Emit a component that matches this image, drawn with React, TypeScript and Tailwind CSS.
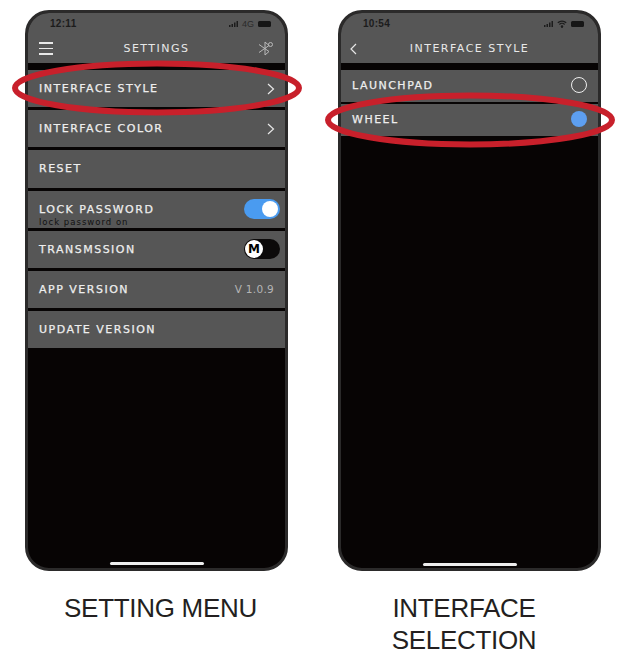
const wide = "font-['DejaVu_Sans',sans-serif]";

function Row({ label, sub, h = "h-[37.2px]", right }: { label: string; sub?: string; h?: string; right?: React.ReactNode }) {
  return (
    <div className={`${h} bg-[#565656] flex items-center justify-between pl-[11px] pr-[5px] shrink-0`}>
      <div className="relative">
        <div className={`${wide} text-[11px] tracking-[1.5px] text-[#eeeeee] leading-none [-webkit-text-stroke:0.25px_#eeeeee]`}>{label}</div>
        {sub && <div className={`${wide} absolute left-0 top-[14px] whitespace-nowrap text-[8.5px] tracking-[1px] text-[#111111] leading-none`}>{sub}</div>}
      </div>
      {right}
    </div>
  );
}

function Chevron() {
  return (
    <svg width="10" height="14" viewBox="0 0 10 14" fill="none" stroke="#e6e6e6" strokeWidth="1.2" className="mr-[4px]">
      <path d="M2 2l5.5 5L2 12" />
    </svg>
  );
}

function Toggle() {
  return (
    <div className="w-[36px] h-[20px] rounded-full bg-[#4a9bf0] flex items-center justify-end pr-[2px]">
      <div className="w-[16px] h-[16px] rounded-full bg-white" />
    </div>
  );
}

function TransToggle() {
  return (
    <div className="w-[36px] h-[20px] rounded-full bg-[#0c0a0a] flex items-center pl-[1px]">
      <div className={`${wide} w-[18px] h-[18px] rounded-full bg-white flex items-center justify-center text-[12px] font-bold leading-none text-black`}>M</div>
    </div>
  );
}

function Bluetooth() {
  return (
    <svg width="16" height="15" viewBox="0 0 16 15" fill="none" stroke="#b9b9b9" strokeWidth="1">
      <path d="M1 3.5l10 7-4 3.5V1l4 3.5-10 7" />
      <circle cx="12.5" cy="3.5" r="2" />
    </svg>
  );
}

function Status({ time, wifi, label }: { time: string; wifi?: boolean; label?: string }) {
  return (
    <div className="h-[17px] flex items-center justify-between pl-[22px] pr-[14px] pt-[5px]">
      <span className="font-['Liberation_Sans',sans-serif] text-[10px] font-semibold tracking-[0.3px] text-[#1c1c1c] leading-none">{time}</span>
      <div className="flex items-center gap-[4px]">
        <svg width="9" height="6" viewBox="0 0 9 6" fill="#1c1c1c">
          <rect x="0" y="4" width="1.5" height="2" />
          <rect x="2.5" y="3" width="1.5" height="3" />
          <rect x="5" y="1.5" width="1.5" height="4.5" />
          <rect x="7.5" y="0" width="1.5" height="6" />
        </svg>
        {label && <span className="font-['Liberation_Sans',sans-serif] text-[9px] text-[#2a2a2a] leading-none">{label}</span>}
        {wifi && (
          <svg width="10" height="8" viewBox="0 0 10 8" fill="none" stroke="#1c1c1c" strokeWidth="1.2">
            <path d="M.8 2.8a6 6 0 0 1 8.4 0M2.4 4.5a3.7 3.7 0 0 1 5.2 0" />
            <circle cx="5" cy="6.6" r=".7" fill="#1c1c1c" />
          </svg>
        )}
        <div className="w-[13px] h-[6px] rounded-[1.5px] bg-[#161616]" />
      </div>
    </div>
  );
}

function Phone({ children, barBottom }: { children: React.ReactNode; barBottom: string }) {
  return (
    <div className="w-[263px] h-[561px] rounded-[24px] border-[3px] border-[#2b2a2a] bg-[#070404] overflow-hidden relative flex flex-col">
      {children}
      <div className={`absolute ${barBottom} left-[82px] w-[94px] h-[3px] rounded-full bg-[#eeeeee]`} />
    </div>
  );
}

function Header({ time, label, wifi, left, title, right }: { time: string; label?: string; wifi?: boolean; left: React.ReactNode; title: string; right?: React.ReactNode }) {
  return (
    <div className="h-[50px] bg-[#565656] shrink-0 mb-[7px]">
      <Status time={time} label={label} wifi={wifi} />
      <div className="h-[33px] pt-[4px] flex items-center justify-between px-[11px] relative">
        {left}
        <span className={`${wide} absolute left-0 right-0 text-center text-[11px] tracking-[1.5px] text-[#e8e8e8] leading-none`}>{title}</span>
        {right}
      </div>
    </div>
  );
}

function Ellipse({ className }: { className: string }) {
  return (
    <svg width="290" height="56" viewBox="0 0 290 56" fill="none" className={`absolute ${className}`}>
      <ellipse cx="145" cy="28" rx="142" ry="24.5" stroke="#c8202b" strokeWidth="6" />
    </svg>
  );
}

export default function App() {
  return (
    <div className="relative w-[617px] h-[652px] bg-white overflow-hidden pt-[10px] pl-[25px] font-['Liberation_Sans',sans-serif]">
      <div className="flex gap-[50px]">
        <Phone barBottom="bottom-[3px]">
          <Header
            time="12:11"
            label="4G"
            title="SETTINGS"
            left={
              <div className="flex flex-col gap-[4px]">
                <div className="w-[14px] h-[1.5px] bg-[#e8e8e8]" />
                <div className="w-[14px] h-[1.5px] bg-[#e8e8e8]" />
                <div className="w-[14px] h-[1.5px] bg-[#e8e8e8]" />
              </div>
            }
            right={<Bluetooth />}
          />
          <div className="flex flex-col gap-[3px]">
            <Row label="INTERFACE STYLE" right={<Chevron />} />
            <Row label="INTERFACE COLOR" right={<Chevron />} />
            <Row label="RESET" />
            <Row label="LOCK PASSWORD" sub="lock password on" right={<Toggle />} />
            <Row label="TRANSMSSION" right={<TransToggle />} />
            <Row
              label="APP VERSION"
              right={<span className={`${wide} text-[10.5px] tracking-[0.3px] text-[#b5b5b5] mr-[6px] leading-none`}>V 1.0.9</span>}
            />
            <Row label="UPDATE VERSION" />
          </div>
        </Phone>
        <Phone barBottom="bottom-[2px]">
          <Header
            time="10:54"
            wifi
            title="INTERFACE STYLE"
            left={
              <svg width="10" height="14" viewBox="0 0 10 14" fill="none" stroke="#e6e6e6" strokeWidth="1.2" className="-ml-[3px]">
                <path d="M7 2L2 7l5 5" />
              </svg>
            }
          />
          <div className="flex flex-col gap-[2px]">
            <Row
              h="h-[32px] pb-[2px]"
              label="LAUNCHPAD"
              right={<div className="w-[16px] h-[16px] rounded-full border border-[#eeeeee] mr-[6px]" />}
            />
            <Row
              h="h-[32px] pb-[2px]"
              label="WHEEL"
              right={<div className="w-[16px] h-[16px] rounded-full bg-[#5d9ff0] mr-[6px]" />}
            />
          </div>
        </Phone>
      </div>

      <div className="flex gap-[50px] mt-[25px] text-[26px] leading-[24px] text-[#231f20] tracking-[-0.3px] text-center">
        <div className="w-[263px] pl-[8px]">SETTING MENU</div>
        <div className="w-[263px] pr-[11px] flex flex-col gap-[8px]">
          <div>INTERFACE</div>
          <div>SELECTION</div>
        </div>
      </div>

      <Ellipse className="left-[12px] top-[60px]" />
      <Ellipse className="left-[325px] top-[92px]" />
    </div>
  );
}
